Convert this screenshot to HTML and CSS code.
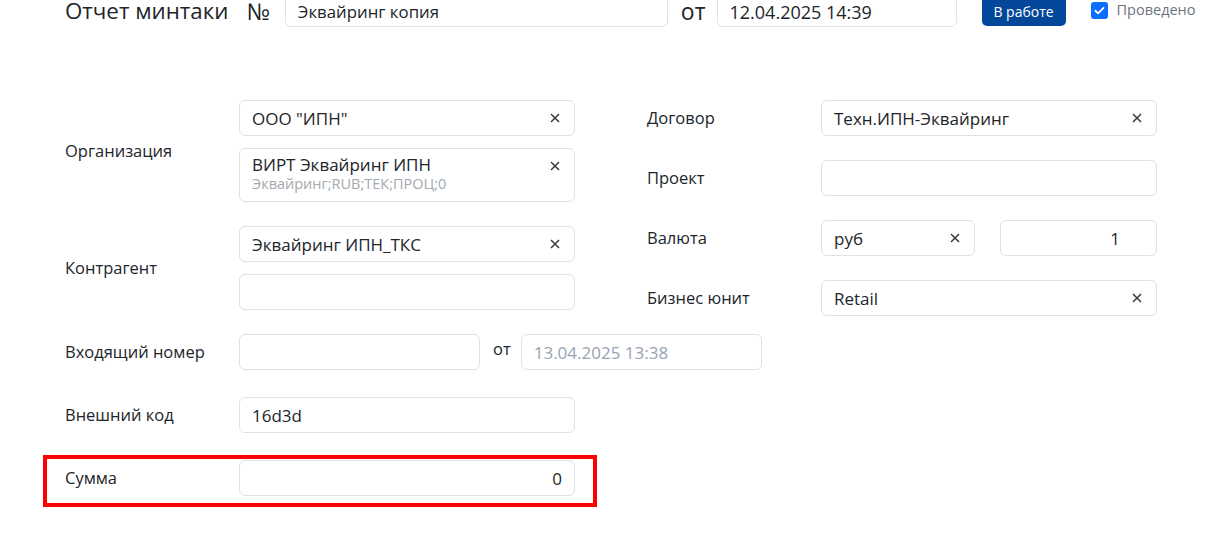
FILE: index.html
```html
<!DOCTYPE html>
<html lang="ru">
<head>
<meta charset="utf-8">
<title>Отчет минтаки</title>
<link rel="stylesheet" href="styles.css">
</head>
<body>
<header class="header">
  <div class="title">Отчет минтаки</div>
  <div class="numsign">№</div>
  <div class="hinput hinput-num">Эквайринг копия</div>
  <div class="from">от</div>
  <div class="hinput hinput-date">12.04.2025 14:39</div>
  <div class="btn">В работе</div>
  <label class="check">
    <span class="checkbox"><svg viewBox="0 0 16 16" width="13" height="13"><path d="M3 8.3l3.2 3.2L13 4.7" fill="none" stroke="#fff" stroke-width="2.2" stroke-linecap="round" stroke-linejoin="round"/></svg></span>
    <span class="check-label">Проведено</span>
  </label>
</header>

<main class="form">
  <section class="col">
    <div class="row">
      <div class="label">Организация</div>
      <div class="stack">
        <div class="field"><span>ООО "ИПН"</span><svg class="x" viewBox="0 0 10 10"><path d="M1 1L9 9M9 1L1 9"/></svg></div>
        <div class="field field-tall">
          <div class="two">
            <span>ВИРТ Эквайринг ИПН</span>
            <span class="sub">Эквайринг;RUB;ТЕК;ПРОЦ;0</span>
          </div>
          <svg class="x x-top" viewBox="0 0 10 10"><path d="M1 1L9 9M9 1L1 9"/></svg>
        </div>
      </div>
    </div>
    <div class="row">
      <div class="label">Контрагент</div>
      <div class="stack">
        <div class="field"><span>Эквайринг ИПН_ТКС</span><svg class="x" viewBox="0 0 10 10"><path d="M1 1L9 9M9 1L1 9"/></svg></div>
        <div class="field"></div>
      </div>
    </div>
    <div class="row row-wide">
      <div class="label">Входящий номер</div>
      <div class="inline">
        <div class="field field-half"></div>
        <div class="small-from">от</div>
        <div class="field field-half muted">13.04.2025 13:38</div>
      </div>
    </div>
    <div class="row row-spaced">
      <div class="label">Внешний код</div>
      <div class="field">16d3d</div>
    </div>
    <div class="row row-spaced">
      <div class="label">Сумма</div>
      <div class="field field-right">0</div>
      <span class="highlight"></span>
    </div>
  </section>

  <section class="col col-right">
    <div class="row">
      <div class="label">Договор</div>
      <div class="field"><span>Техн.ИПН-Эквайринг</span><svg class="x" viewBox="0 0 10 10"><path d="M1 1L9 9M9 1L1 9"/></svg></div>
    </div>
    <div class="row">
      <div class="label">Проект</div>
      <div class="field"></div>
    </div>
    <div class="row">
      <div class="label">Валюта</div>
      <div class="pair">
        <div class="field field-cur"><span>руб</span><svg class="x" viewBox="0 0 10 10"><path d="M1 1L9 9M9 1L1 9"/></svg></div>
        <div class="field field-rate">1</div>
      </div>
    </div>
    <div class="row">
      <div class="label">Бизнес юнит</div>
      <div class="field"><span>Retail</span><svg class="x" viewBox="0 0 10 10"><path d="M1 1L9 9M9 1L1 9"/></svg></div>
    </div>
  </section>
</main>
</body>
</html>
```

FILE: styles.css
```css
html, body {
  margin: 0;
  min-height: 546px;
}

body {
  font-family: "Open Sans", "Noto Sans", sans-serif;
  color: #212529;
  background: #fff;
}

.header {
  display: flex;
  align-items: flex-end;
  height: 27px;
  padding-left: 65px;
  white-space: nowrap;
}

.title {
  flex: none;
  font-size: 22.3px;
  line-height: 22px;
  margin: 0 18px 5px 0;
}

.numsign {
  flex: none;
  font-size: 23px;
  line-height: 22px;
  margin: 0 15px 5px 0;
}

.hinput {
  flex: none;
  height: 38px;
  margin-top: -11px;
  box-sizing: border-box;
  border: 1px solid #dee2e6;
  border-radius: 6px;
  padding: 7px 12px 0;
  display: flex;
  align-items: center;
  font-size: 16.8px;
  line-height: 20px;
}

.hinput-num {
  width: 383px;
}

.hinput-date {
  width: 240px;
  font-size: 18px;
}

.from {
  flex: none;
  font-size: 23px;
  line-height: 22px;
  margin: 0 11px 5px 13px;
}

.btn {
  flex: none;
  margin: -12px 0 1px 25px;
  width: 84px;
  height: 38px;
  box-sizing: border-box;
  background: #03479a;
  color: #fff;
  border-radius: 5px;
  font-size: 14px;
  line-height: 18px;
  display: flex;
  align-items: flex-end;
  justify-content: center;
  padding-bottom: 5px;
}

.check {
  flex: none;
  display: flex;
  align-items: center;
  margin: 0 0 8px 25px;
}

.checkbox {
  width: 17px;
  height: 17px;
  box-sizing: border-box;
  background: #0d6efd;
  border-radius: 3px;
  display: flex;
  align-items: center;
  justify-content: center;
}

.check-label {
  margin-left: 9px;
  font-size: 14.5px;
  line-height: 18px;
  color: #6c757d;
}

.form {
  display: flex;
  align-items: flex-start;
  padding-left: 65px;
  padding-bottom: 50px;
  margin-top: 73px;
}

.col {
  display: flex;
  flex-direction: column;
  gap: 24px;
  width: 510px;
}

.col-right {
  margin-left: 72px;
}

.row {
  display: grid;
  grid-template-columns: 174px 336px;
  align-items: center;
  position: relative;
}

.row-wide {
  grid-template-columns: 174px auto;
}

.row-spaced {
  margin-top: 3px;
}

.label {
  font-size: 16.5px;
  margin-top: -1px;
}

.stack {
  display: flex;
  flex-direction: column;
  gap: 12px;
}

.field {
  height: 36px;
  box-sizing: border-box;
  border: 1px solid #dee2e6;
  border-radius: 6px;
  padding: 0 14px 0 12px;
  display: flex;
  align-items: center;
  justify-content: space-between;
  font-size: 17px;
  background: #fff;
}

.field-tall {
  height: 54px;
  align-items: flex-start;
  padding-top: 6px;
}

.two {
  display: flex;
  flex-direction: column;
  line-height: 20px;
}

.sub {
  font-size: 14.5px;
  line-height: 17px;
  color: #a3a9b0;
}

.x {
  width: 10px;
  height: 10px;
  flex: none;
}

.x path {
  stroke: #343a40;
  stroke-width: 1.5;
  fill: none;
}

.x-top {
  margin-top: 6px;
}

.inline {
  display: flex;
  align-items: flex-start;
}

.field-half {
  width: 241px;
}

.small-from {
  margin: 3px 10px 0 13px;
  font-size: 16.5px;
}

.muted {
  color: #97a3b3;
}

.field-right {
  justify-content: flex-end;
  padding-right: 12px;
}

.pair {
  display: flex;
  justify-content: space-between;
}

.field-cur {
  width: 154px;
}

.field-rate {
  width: 157px;
  justify-content: flex-end;
  padding-right: 36px;
}

.highlight {
  position: absolute;
  left: -22px;
  right: -22px;
  top: -5px;
  bottom: -11px;
  border: 4px solid #f00;
  pointer-events: none;
}
```
